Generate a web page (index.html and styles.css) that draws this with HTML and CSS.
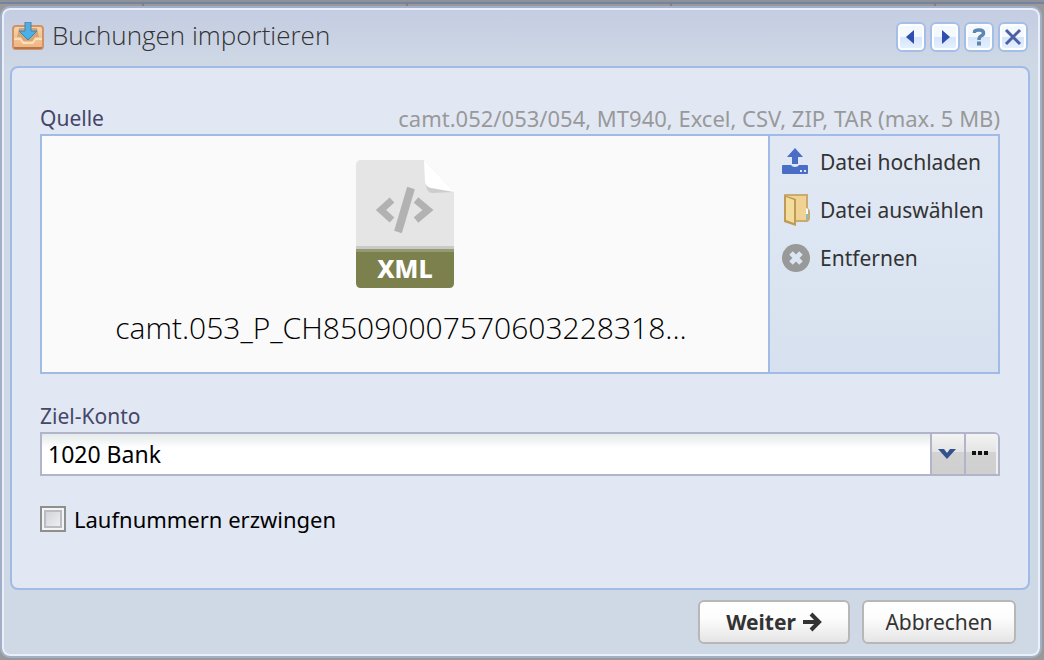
FILE: index.html
```html
<!DOCTYPE html>
<html lang="de">
<head>
    <meta charset="UTF-8">
    <meta name="viewport" content="width=device-width, initial-scale=1.0">
    <title>Buchungen importieren</title>
    <link rel="stylesheet" href="styles.css">
</head>
<body>
    <div class="backdrop-line"><span></span><span></span><span></span><span></span></div>
    <form class="dialog" onsubmit="return false">
        <header class="dialog-header">
            <svg class="title-icon" width="32" height="30" viewBox="0 0 32 30" aria-hidden="true">
                <defs>
                    <linearGradient id="tray" x1="0" y1="0" x2="0" y2="1">
                        <stop offset="0" stop-color="#f7d3a6"/>
                        <stop offset="1" stop-color="#eeb481"/>
                    </linearGradient>
                    <linearGradient id="arrow" x1="0" y1="0" x2="0" y2="1">
                        <stop offset="0" stop-color="#5fa9d6"/>
                        <stop offset="1" stop-color="#3db5f2"/>
                    </linearGradient>
                </defs>
                <rect x="0" y="3" width="32" height="25" rx="4" fill="#cf936a"/>
                <rect x="2" y="5" width="28" height="21" rx="2" fill="url(#tray)"/>
                <path d="M7 6h18l2 9h-4l-2 4H11l-2-4H5z" fill="#d5a477"/>
                <path d="M2 16h7l3 4h8l3-4h7v2h-6l-3 4h-10l-3-4H2z" fill="#fbe0b8"/>
                <path d="M2 25h28v1q0 1-2 1H4q-2 0-2-1z" fill="#b87549"/>
                <path d="M13 0h6v9h6l-9 9-9-9h6z" fill="url(#arrow)" stroke="#3f84b4"/>
            </svg>
            <h1 class="dialog-title">Buchungen importieren</h1>
            <div class="tools">
                <button type="button" class="tool" aria-label="Zurück">
                    <svg width="22" height="22" viewBox="0 0 22 22"><path d="M14 4v14L6 11z" fill="#2f4eb0"/></svg>
                </button>
                <button type="button" class="tool" aria-label="Vor">
                    <svg width="22" height="22" viewBox="0 0 22 22"><path d="M8 4v14l8-7z" fill="#2f4eb0"/></svg>
                </button>
                <button type="button" class="tool" aria-label="Hilfe">
                    <svg width="22" height="22" viewBox="0 0 22 22"><path d="M6.500 7V6q0-2 4.500-2t4.500 3q0 2-2.500 3-2 1-2 4" fill="none" stroke="#5e86ae" stroke-width="3.500"/><path d="M9 15.500h4v4H9z" fill="#5e86ae"/></svg>
                </button>
                <button type="button" class="tool" aria-label="Schliessen">
                    <svg width="22" height="22" viewBox="0 0 22 22"><path d="M4 4l14 14M18 4L4 18" stroke="#4c5fa6" stroke-width="3"/></svg>
                </button>
            </div>
        </header>

        <main class="panel">
            <div class="field-head">
                <span class="label">Quelle</span>
                <span class="hint">camt.052/053/054, MT940, Excel, CSV, ZIP, TAR (max. 5 MB)</span>
            </div>
            <div class="source">
                <div class="preview">
                    <svg width="98" height="128" viewBox="0 0 98 128" role="img" aria-label="XML">
                        <path d="M5 0h63l30 32v91q0 5-5 5H5q-5 0-5-5V5q0-5 5-5z" fill="#e5e5e5"/>
                        <path d="M70 25q1 8 6 8l22-1z" fill="#cdcdcd"/>
                        <path d="M68 0l30 32-23-4q-5-1-6-6z" fill="#fff"/>
                        <path d="M0 86h98v3H0z" fill="#c9c9c9"/>
                        <path d="M0 89h98v34q0 5-5 5H5q-5 0-5-5z" fill="#7b804d"/>
                        <path d="M0 89h98v3H0z" fill="#969a72"/>
                        <path d="M36 40L25 50l11 10M60 40l12 10-12 10" fill="none" stroke="#b2b2b2" stroke-width="7"/>
                        <path d="M55 28L42 72" stroke="#b2b2b2" stroke-width="8"/>
                        <text class="file-type" x="49" y="118" text-anchor="middle">XML</text>
                    </svg>
                    <div class="file-name">camt.053_P_CH85090007570603228318...</div>
                </div>
                <div class="actions">
                    <button type="button" class="action">
                        <svg width="28" height="32" viewBox="0 0 28 32"><path d="M13 2l8 9h-5v7h-6v-7H5z" fill="#4a6dc8"/><path d="M1 19h8q1 2 4 2t4-2h8q1 0 1 1v7q0 1-1 1H1q-1 0-1-1v-7q0-1 1-1z" fill="#4a6dc8"/><path d="M18 24h2v2h-2zM22 24h2v2h-2z" fill="#dfe7f5"/></svg>
                        Datei hochladen
                    </button>
                    <button type="button" class="action">
                        <svg width="28" height="32" viewBox="0 0 28 32">
                            <path d="M2 0h24v14l2 3v8l-2 3H12z" fill="#c9ab70"/>
                            <path d="M4 2h20v24H12z" fill="#f0d292"/>
                            <path d="M2 1l12 4v27L2 28z" fill="#c09b58"/>
                            <path d="M4 3l8 3v23l-8-3z" fill="#f2dd9c"/>
                            <path d="M24 14l2 1v5h-2z" fill="#fff"/>
                            <path d="M24 20h2v5h-2z" fill="#7fc0d8"/>
                        </svg>
                        Datei auswählen
                    </button>
                    <button type="button" class="action">
                        <svg width="28" height="32" viewBox="0 0 28 32"><circle cx="14" cy="16" r="14" fill="#999"/><path d="M9 11l10 10M19 11L9 21" stroke="#dce5f2" stroke-width="5"/></svg>
                        Entfernen
                    </button>
                </div>
            </div>

            <label class="label account-label" for="account">Ziel-Konto</label>
            <div class="combo">
                <input type="text" id="account" class="combo-input" value="1020 Bank">
                <button type="button" class="combo-btn" aria-label="Liste öffnen">
                    <svg width="20" height="14" viewBox="0 0 20 14"><path d="M1 2h6l3 4 3-4h6l-9 10z" fill="#35508f"/></svg>
                </button>
                <button type="button" class="combo-btn combo-more" aria-label="Mehr">
                    <svg width="18" height="14" viewBox="0 0 18 14"><path d="M1 4h4v4H1zM7 4h4v4H7zM13 4h4v4h-4z" fill="#111"/></svg>
                </button>
            </div>

            <div class="check-row">
                <input type="checkbox" id="force" class="check">
                <label for="force">Laufnummern erzwingen</label>
            </div>
        </main>

        <footer class="dialog-footer">
            <button type="submit" class="btn btn-primary">
                Weiter
                <svg width="20" height="20" viewBox="0 0 20 20"><path d="M1 10h15M9 2l8 8-8 8" fill="none" stroke="#333" stroke-width="4"/></svg>
            </button>
            <button type="button" class="btn">Abbrechen</button>
        </footer>
    </form>
</body>
</html>
```
FILE: styles.css
```css
* {
    margin: 0;
    padding: 0;
    box-sizing: border-box;
}

body {
    min-height: 100vh;
    display: flex;
    flex-direction: column;
    background: #999;
    font-family: "Noto Sans", sans-serif;
    font-size: 21px;
    line-height: 28px;
    color: #333;
}

button, input {
    font: inherit;
    color: inherit;
}

svg {
    display: block;
    flex: none;
}

.backdrop-line {
    height: 6px;
    padding-left: 142px;
    border-top: 2px solid #909396;
    display: flex;
    gap: 262px;
    overflow: hidden;
    background: linear-gradient(#7283a5 0 2px, #999 2px);
}

.backdrop-line span {
    flex: none;
    width: 2px;
    background: #7b7f88;
}

.dialog {
    flex: 1;
    display: flex;
    flex-direction: column;
    margin: 0 2px 2px 0;
    padding: 2px 10px 12px 8px;
    border: 2px solid #a3afc6;
    border-radius: 10px;
    background: linear-gradient(#c4cce2, #cfd9e5 60px);
    box-shadow: inset 0 0 0 2px #eaf0fb;
}

.dialog-header {
    display: flex;
    align-items: center;
    height: 56px;
    padding: 0 2px 2px;
}

.title-icon {
    margin-right: 8px;
}

.dialog-title {
    flex: 1;
    padding-bottom: 4px;
    font-family: "Open Sans", sans-serif;
    font-size: 26px;
    font-weight: 300;
    line-height: 36px;
}

.tools {
    display: flex;
    gap: 4px;
}

.tool {
    width: 30px;
    height: 30px;
    display: flex;
    align-items: center;
    justify-content: center;
    border: 2px solid #a3bfe9;
    border-radius: 6px;
    background: linear-gradient(#f4f8ff 50%, #d5e5fb 50%, #e8f2ff);
    box-shadow: inset 0 0 0 2px #fff;
}

.panel {
    flex: 1;
    padding: 36px 28px;
    border: 2px solid #a0bbe6;
    border-radius: 8px;
    background: #e1e8f4;
}

.field-head {
    display: flex;
    justify-content: space-between;
    margin-bottom: 2px;
}

.label {
    color: #464668;
}

.hint {
    font-size: 22px;
    color: #999;
}

.source {
    display: flex;
    height: 240px;
    border: 2px solid #a0bbe6;
}

.preview {
    flex: 1;
    display: flex;
    flex-direction: column;
    align-items: center;
    padding-top: 24px;
    background: #fafafa;
}

.file-type {
    font-family: "Noto Sans", sans-serif;
    font-size: 25px;
    font-weight: 800;
    fill: #fff;
}

.file-name {
    margin-top: 20px;
    padding-right: 8px;
    font-family: "Open Sans", sans-serif;
    font-size: 30px;
    font-weight: 300;
    line-height: 40px;
    color: #000;
}

.actions {
    width: 230px;
    padding: 2px 12px;
    border-left: 2px solid #a0bbe6;
    background: linear-gradient(#e1e8f4, #dce6f2 50%, #d7e0ee);
}

.action {
    width: 100%;
    height: 48px;
    display: flex;
    align-items: center;
    gap: 10px;
    border: none;
    background: none;
    white-space: nowrap;
}

.account-label {
    display: block;
    margin: 28px 0 2px;
}

.combo {
    display: flex;
    height: 44px;
    border: 2px solid #b2b5ca;
    border-top-right-radius: 6px;
    overflow: hidden;
}

.combo-input {
    flex: 1;
    min-width: 0;
    padding: 0 6px;
    border: none;
    background: linear-gradient(#e4eaea, #fff 14px);
    font-size: 23px;
    color: #000;
}

.combo-btn {
    width: 34px;
    padding-right: 2px;
    display: flex;
    align-items: center;
    justify-content: center;
    border: none;
    border-left: 2px solid #b2b5ca;
    background: linear-gradient(#f3f3f3, #e4e4e4 46%, #d2d2d2 46%, #cfcfcf);
}

.combo-more {
    padding-right: 4px;
    box-shadow: inset -2px 0 0 #f0f0f0;
}

.check-row {
    display: flex;
    align-items: center;
    gap: 8px;
    margin-top: 28px;
    font-size: 22px;
    line-height: 30px;
    color: #000;
}

.check {
    appearance: none;
    width: 26px;
    height: 26px;
    border: 2px solid #8e8f8f;
    background: linear-gradient(135deg, #c9ccd2, #f6f6f6);
    box-shadow: inset 0 0 0 2px #f4f4f4, inset 0 0 0 4px #b9bcc2;
}

.dialog-footer {
    display: flex;
    justify-content: flex-end;
    gap: 12px;
    padding: 10px 14px 0;
}

.btn {
    display: flex;
    align-items: center;
    justify-content: center;
    gap: 6px;
    height: 44px;
    min-width: 154px;
    border: 2px solid #b7b7b7;
    border-radius: 6px;
    background: linear-gradient(#fff, #fdfdfd 40%, #e5e5e5);
}

.btn-primary {
    min-width: 152px;
    font-weight: 700;
}
```
